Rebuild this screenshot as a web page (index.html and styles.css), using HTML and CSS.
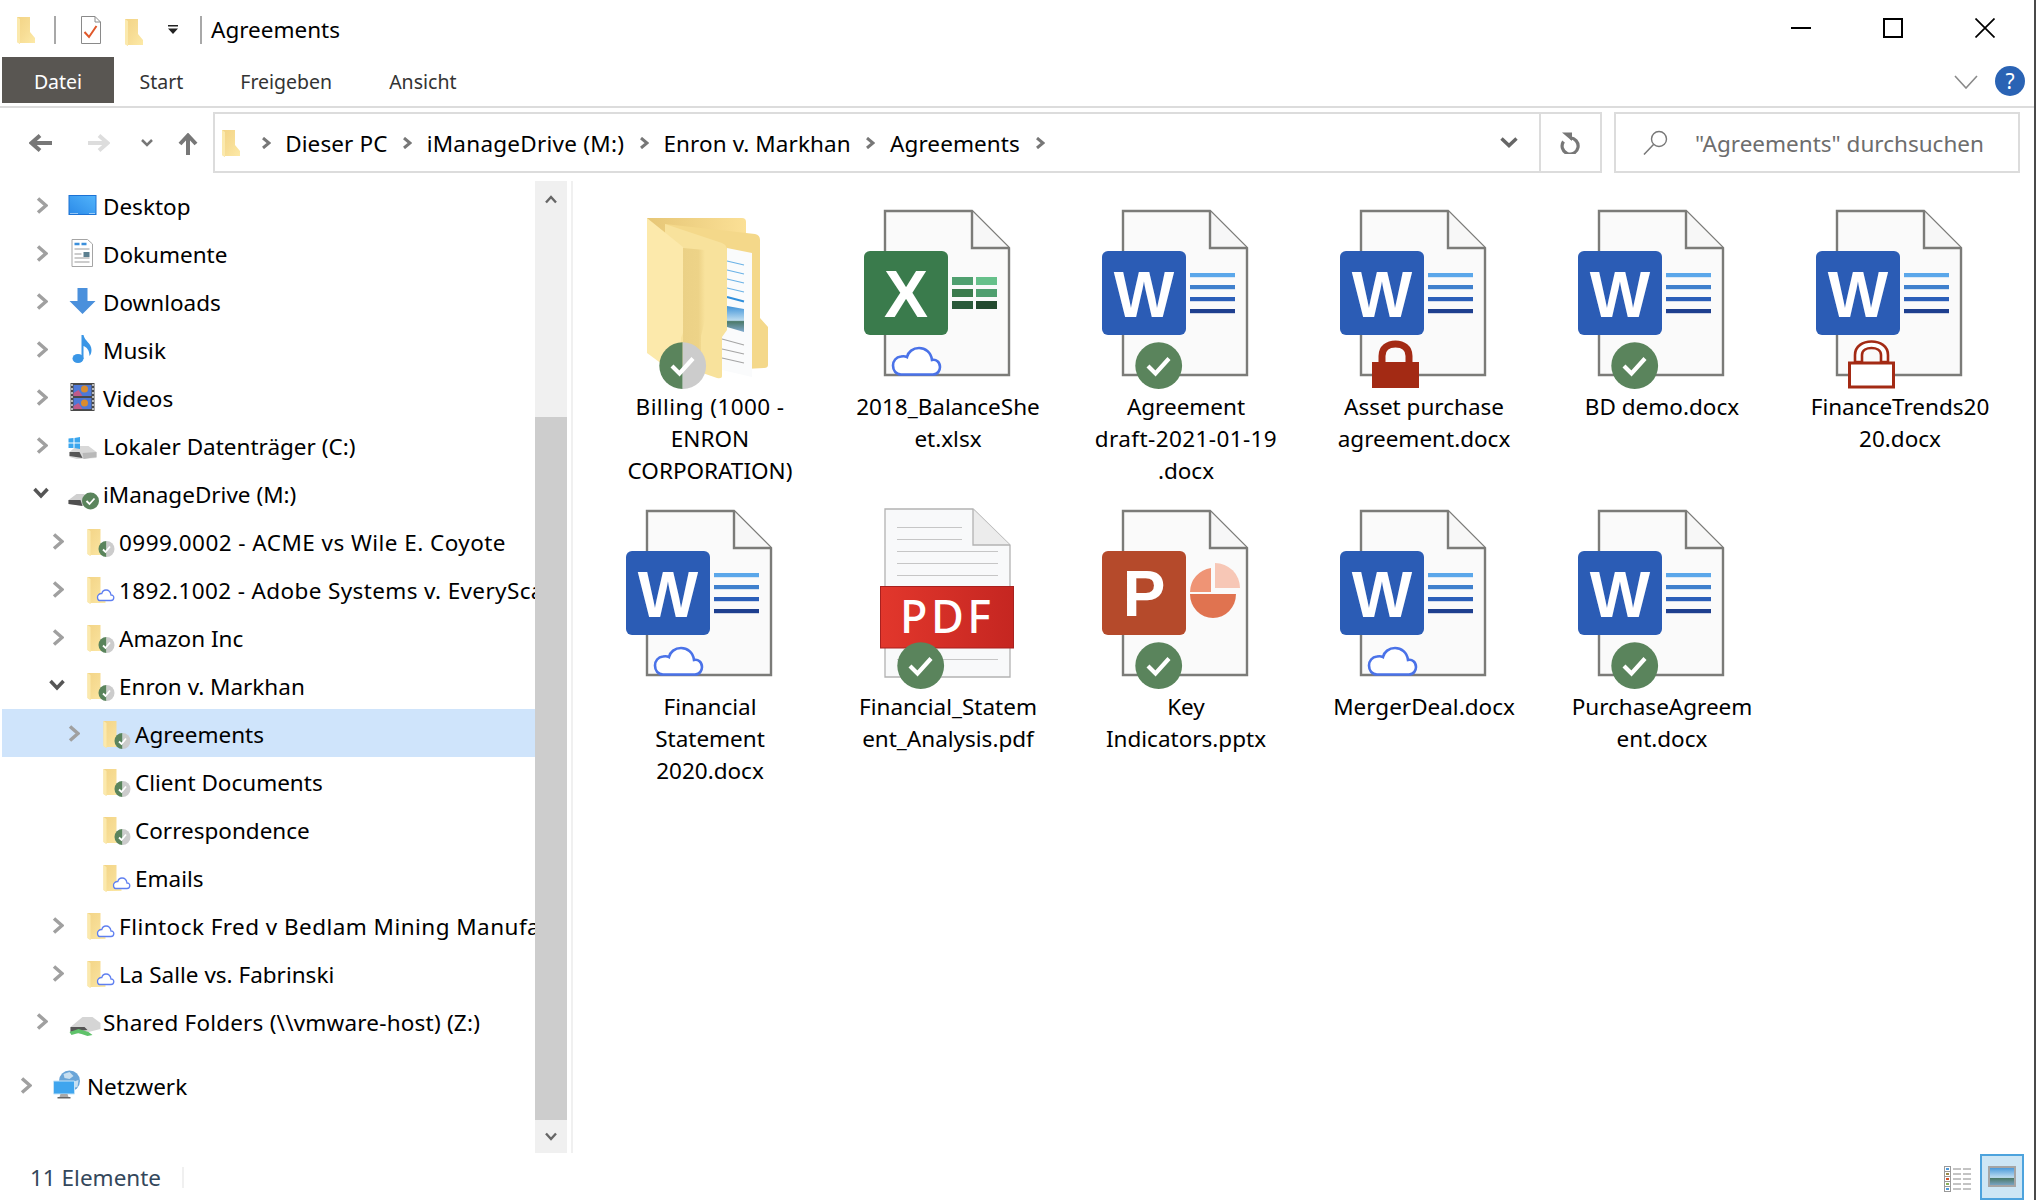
FILE: index.html
```html
<!DOCTYPE html>
<html lang="de">
<head>
<meta charset="utf-8">
<title>Agreements</title>
<link rel="stylesheet" href="styles.css">
</head>
<body>
<svg class="defs" aria-hidden="true">
  <defs>
    <linearGradient id="gf" x1="0" x2="1" y1="0" y2="1"><stop offset="0" stop-color="#f3d486"/><stop offset=".5" stop-color="#f7dd95"/><stop offset="1" stop-color="#fdeaa8"/></linearGradient>
    <linearGradient id="gbig" x1="0" x2="1" y1="0" y2="0"><stop offset="0" stop-color="#e6c676"/><stop offset="1" stop-color="#fbe096"/></linearGradient>
    <linearGradient id="gmid" x1="0" x2="1" y1="0" y2="0"><stop offset="0" stop-color="#ebd186"/><stop offset=".7" stop-color="#edd388"/><stop offset="1" stop-color="#f8e29c"/></linearGradient>
    <linearGradient id="gpdf" x1="0" x2="1" y1="0" y2="0"><stop offset="0" stop-color="#e2372c"/><stop offset="1" stop-color="#c52621"/></linearGradient>
    <linearGradient id="gdesk" x1="0" x2="1" y1="1" y2="0"><stop offset="0" stop-color="#2b8ae8"/><stop offset="1" stop-color="#52b4fb"/></linearGradient>
    <linearGradient id="gsky" x1="0" x2="0" y1="0" y2="1"><stop offset="0" stop-color="#3f93d8"/><stop offset=".55" stop-color="#bcdcf0"/><stop offset=".6" stop-color="#4c7a6a"/><stop offset="1" stop-color="#7fa9cf"/></linearGradient>

    <g id="sfolder">
      <path d="M0 0H13V15L18 21V26H3V27L0 25Z" fill="url(#gf)"/>
      <path d="M0 0L3 2V27L0 25Z" fill="#fbe9ad"/>
    </g>
    <g id="t-folder"><use href="#sfolder" x="3" y="6"/></g>
    <g id="t-sync">
      <use href="#t-folder"/>
      <path d="M22 18A8 8 0 0 0 22 34Z" fill="#5a845c"/>
      <path d="M22 18A8 8 0 0 1 22 34Z" fill="#cccccc"/>
      <path d="M18.5 26.5L21 29L25.5 23.5" fill="none" stroke="#fff" stroke-width="1.8"/>
    </g>
    <g id="t-cloud">
      <use href="#t-folder"/>
      <path d="M15 29.5H26.5C28.5 29.5 29.3 28 29.3 26.5C29.3 25 28 23.8 26.5 24C26 21 24 19 21.5 19C19.3 19 17.8 20.5 17.3 22.5C15 22.3 13 24 13 26C13 28 14 29.5 15 29.5Z" fill="#fff" stroke="#5f7ff0" stroke-width="1.3"/>
    </g>

    <g id="doc">
      <path d="M42 11H129L166 48V175H42Z" fill="#fafafa" stroke="#7b7b78" stroke-width="2.4"/>
      <path d="M129 11V48H166" fill="#f7f7f7" stroke="#7b7b78" stroke-width="2.4"/>
    </g>
    <g id="word">
      <use href="#doc"/>
      <rect x="21" y="51" width="84" height="84" rx="6" fill="#2b5cb5"/>
      <text class="tile" x="63" y="117" text-anchor="middle" font-size="64">W</text>
      <rect x="109" y="73" width="45" height="4.2" fill="#5ba7ea"/>
      <rect x="109" y="85" width="45" height="4.2" fill="#3f80cd"/>
      <rect x="109" y="97" width="45" height="4.2" fill="#2b5fb9"/>
      <rect x="109" y="109" width="45" height="4.2" fill="#1e3f8f"/>
    </g>
    <g id="excel">
      <use href="#doc"/>
      <rect x="21" y="51" width="84" height="84" rx="6" fill="#3a7b4c"/>
      <text class="tile" x="63" y="117" text-anchor="middle" font-size="66">X</text>
      <rect x="109" y="77" width="21" height="8" fill="#4f9f6f"/><rect x="133" y="77" width="21" height="8" fill="#66c08a"/>
      <rect x="109" y="89" width="21" height="8" fill="#3a7b4c"/><rect x="133" y="89" width="21" height="8" fill="#4f9f6f"/>
      <rect x="109" y="101" width="21" height="8" fill="#2a5a3a"/><rect x="133" y="101" width="21" height="8" fill="#234a2f"/>
    </g>
    <g id="ppt">
      <use href="#doc"/>
      <rect x="21" y="51" width="84" height="84" rx="6" fill="#b54a2b"/>
      <text class="tile" x="63" y="116" text-anchor="middle" font-size="64">P</text>
      <path d="M134 63A25 25 0 0 1 159 88H134Z" fill="#f7c7b6"/>
      <path d="M130 68A24.500 24.500 0 0 0 109 92H130Z" fill="#ef9475"/>
      <path d="M109 94H155A23 24 0 0 1 109 94Z" fill="#e07350"/>
    </g>
    <g id="pdf">
      <path d="M42 9H130L167 45V177H42Z" fill="#f8f9fa" stroke="#b2b2b2" stroke-width="1.300"/>
      <path d="M130 9V45H167" fill="#ececec" stroke="#b2b2b2" stroke-width="1.300"/>
      <path d="M54 27.500H119M54 39.500H119M54 51.500H155M54 63.500H155M54 75.500H155M54 159.500H155" stroke="#c6c6c6" stroke-width="1.200" fill="none"/>
      <rect x="37.500" y="86.500" width="133" height="61.500" fill="url(#gpdf)" stroke="#a8211f"/>
      <text class="pdf-text" x="57" y="133" font-size="45" textLength="91" lengthAdjust="spacing">PDF</text>
    </g>
    <g id="bigfolder">
      <path d="M42 18H137Q141 18 141 22V60H42Z" fill="url(#gbig)"/>
      <path d="M60 24L150 34Q155 35 155 40V118L163 127V165Q163 168 159 168L120 170L60 150Z" fill="#f4d88a"/>
      <path d="M122 48L147 53V177L117 170V120L122 110Z" fill="#fafbfc"/>
      <path d="M122 61L139 65M122 70L139 74M122 79L139 83M122 88L139 92" stroke="#6bb2e6" stroke-width="1.200"/>
      <path d="M122 97L139 101.500" stroke="#2f8fdc" stroke-width="2"/>
      <path d="M122 106L139 109V132L122 127Z" fill="url(#gsky)"/>
      <path d="M117 139L139 145M117 149L139 154M117 158L139 163" stroke="#a5a5a5" stroke-width="1.100"/>
      <path d="M60 24L117 43Q122 45 122 50V130L117 137V176Q117 179 112 178L60 160Z" fill="#f8e29c"/>
      <path d="M78 48L100 50V120L96 136V170L78 165Z" fill="url(#gmid)"/>
      <path d="M42 18L78 47V133L76 138V178L42 153Z" fill="#fce9ab"/>
    </g>
    <g id="b-check">
      <circle cx="77.700" cy="165.700" r="23.400" fill="#5a845c"/>
      <path d="M67 166L74.500 173.500L88 158.500" fill="none" stroke="#fff" stroke-width="4.200"/>
    </g>
    <g id="b-half">
      <path d="M77.700 142.300A23.400 23.400 0 0 0 77.700 189.100Z" fill="#5a845c"/>
      <path d="M77.700 142.300A23.400 23.400 0 0 1 77.700 189.100Z" fill="#cccccc"/>
      <path d="M67 166L74.500 173.500L88 158.500" fill="none" stroke="#fff" stroke-width="4.200"/>
    </g>
    <g id="b-cloud">
      <path d="M58 174.500H90C95 174.500 97 170 97 167C97 162 93 159 89 160C88 152 82 148 76 148C70 148 65 152 64 157C62 156 60 156 58 156.500C53 157 50 161 50 165.500C50 170.500 53 174.500 58 174.500Z" fill="#fff" stroke="#4a72e8" stroke-width="2.600"/>
    </g>
    <g id="b-lock">
      <path d="M63 164V156C63 148 69 144 76.500 144C84 144 90 148 90 156V164" fill="none" stroke="#a32a14" stroke-width="7"/>
      <rect x="53" y="162" width="47" height="26" fill="#a32a14"/>
    </g>
    <g id="b-lock-open">
      <path d="M60 162V155C60 146 68 141.500 76.500 141.500C85 141.500 93 146 93 155V162H86V155C86 150 81 148 76.500 148C72 148 67 150 67 155V162Z" fill="#fff" stroke="#a32a14" stroke-width="2.600"/>
      <rect x="54.500" y="163" width="44" height="24" fill="#fff" stroke="#a32a14" stroke-width="3"/>
    </g>
  </defs>
</svg>

<div class="window">
  <header class="titlebar">
    <svg class="qa-folder" width="18" height="27" viewBox="0 0 18 27"><use href="#sfolder"/></svg>
    <span class="qa-sep"></span>
    <svg class="qa-doc" width="20" height="28" viewBox="0 0 20 28"><path d="M.5.5H14L19.500 6V27.500H.5Z" fill="#fff" stroke="#8a8a8a"/><path d="M14 .5V6H19.500" fill="none" stroke="#8a8a8a"/><path d="M3.500 16L8 21L15.500 10" fill="none" stroke="#e0582a" stroke-width="2"/></svg>
    <svg class="qa-folder2" width="18" height="27" viewBox="0 0 18 27"><use href="#sfolder"/></svg>
    <svg class="qa-dd" width="10" height="9" viewBox="0 0 10 9"><path d="M0 0H10V1.500H0ZM0 3.500H10L5 9Z" fill="#222"/></svg>
    <span class="qa-sep sep2"></span>
    <span class="title-text">Agreements</span>
    <div class="win-ctrls">
      <span class="win-btn"><svg width="20" height="20" viewBox="0 0 20 20"><path d="M0 10H20" stroke="#000" stroke-width="2"/></svg></span>
      <span class="win-btn"><svg width="20" height="20" viewBox="0 0 20 20"><rect x="1" y="1" width="18" height="18" fill="none" stroke="#000" stroke-width="2"/></svg></span>
      <span class="win-btn"><svg width="20" height="20" viewBox="0 0 20 20"><path d="M.5.5L19.500 19.500M19.500.5L.5 19.500" stroke="#000" stroke-width="1.700"/></svg></span>
    </div>
  </header>

  <nav class="tabs">
    <span class="tab tab-file">Datei</span>
    <span class="tab">Start</span>
    <span class="tab">Freigeben</span>
    <span class="tab">Ansicht</span>
    <svg class="ribbon-chev" width="24" height="14" viewBox="0 0 24 14"><path d="M1 1L12 13L23 1" fill="none" stroke="#8a8a8a" stroke-width="1.600"/></svg>
    <span class="help">?</span>
  </nav>

  <div class="navbar">
    <div class="nav-btns">
      <svg width="23" height="18" viewBox="0 0 23 18"><path d="M23 9H3M11 1.500L2.500 9L11 16.500" fill="none" stroke="#777" stroke-width="4"/></svg>
      <svg class="nb-fwd" width="22" height="18" viewBox="0 0 22 18"><path d="M0 9H19M11 1.500L19.500 9L11 16.500" fill="none" stroke="#ddd" stroke-width="4"/></svg>
      <svg class="nb-dd" width="12" height="8" viewBox="0 0 12 8"><path d="M1 1L6 6L11 1" fill="none" stroke="#777" stroke-width="2.500"/></svg>
      <svg class="nb-up" width="20" height="22" viewBox="0 0 20 22"><path d="M10 22V3M2 11L10 2.500L18 11" fill="none" stroke="#777" stroke-width="4"/></svg>
    </div>
    <div class="address">
      <svg class="addr-folder" width="18" height="27" viewBox="0 0 18 27"><use href="#sfolder"/></svg>
      <svg class="addr-chev" width="10" height="12" viewBox="0 0 10 12"><path d="M2 1L8 6L2 11" fill="none" stroke="#777" stroke-width="3"/></svg>
      <span class="crumb">Dieser PC</span>
      <svg class="addr-chev" width="10" height="12" viewBox="0 0 10 12"><path d="M2 1L8 6L2 11" fill="none" stroke="#777" stroke-width="3"/></svg>
      <span class="crumb crumb-wide">iManageDrive (M:)</span>
      <svg class="addr-chev" width="10" height="12" viewBox="0 0 10 12"><path d="M2 1L8 6L2 11" fill="none" stroke="#777" stroke-width="3"/></svg>
      <span class="crumb">Enron v. Markhan</span>
      <svg class="addr-chev" width="10" height="12" viewBox="0 0 10 12"><path d="M2 1L8 6L2 11" fill="none" stroke="#777" stroke-width="3"/></svg>
      <span class="crumb">Agreements</span>
      <svg class="addr-chev" width="10" height="12" viewBox="0 0 10 12"><path d="M2 1L8 6L2 11" fill="none" stroke="#777" stroke-width="3"/></svg>
      <svg class="addr-dd" width="18" height="11" viewBox="0 0 18 11"><path d="M1.500 1.500L9 8.500L16.500 1.500" fill="none" stroke="#666" stroke-width="3.500"/></svg>
      <span class="refresh"><svg width="20" height="22" viewBox="0 0 20 22"><path d="M10 6A8 8 0 1 1 3.500 9.500" fill="none" stroke="#777" stroke-width="3.200"/><path d="M2 .5H12V9Z" fill="#777"/></svg></span>
    </div>
    <div class="search">
      <svg class="search-icon" width="25" height="25" viewBox="0 0 25 25"><circle cx="16" cy="9" r="7.500" fill="none" stroke="#777" stroke-width="1.400"/><path d="M10.500 14.500L1 24.500" stroke="#777" stroke-width="1.500"/></svg>
      <span class="search-text">"Agreements" durchsuchen</span>
    </div>
  </div>

  <main class="main">
    <div class="tree">
      <div class="row d0"><svg class="chev" viewBox="0 0 12 17"><path d="M2 1.500L10 8.500L2 15.500"/></svg><svg class="ticon" viewBox="0 0 34 36"><rect x=".5" y="8.500" width="27" height="19" fill="url(#gdesk)" stroke="#1c72d4"/><path d="M2 26.500H10M21 26.500H26" stroke="#fff" stroke-dasharray="1 1"/></svg><span class="rt">Desktop</span></div>
      <div class="row d0"><svg class="chev" viewBox="0 0 12 17"><path d="M2 1.500L10 8.500L2 15.500"/></svg><svg class="ticon" viewBox="0 0 34 36"><path d="M3.500 4.500H19L24 9V31.500H3.500Z" fill="#fff" stroke="#a5a5a5"/><path d="M6 9H11M13 9H18" stroke="#3b8fdc" stroke-width="2.500"/><path d="M6 14H21M6 27H21M6 23H21M6 19H13" stroke="#9a9a9a" stroke-width="1.200"/><rect x="15" y="17" width="6" height="5" fill="#5b7f8f"/></svg><span class="rt">Dokumente</span></div>
      <div class="row d0"><svg class="chev" viewBox="0 0 12 17"><path d="M2 1.500L10 8.500L2 15.500"/></svg><svg class="ticon" viewBox="0 0 34 36"><path d="M9 5H19V18H27L14 31L1 18H9Z" fill="#4a90dc"/></svg><span class="rt">Downloads</span></div>
      <div class="row d0"><svg class="chev" viewBox="0 0 12 17"><path d="M2 1.500L10 8.500L2 15.500"/></svg><svg class="ticon" viewBox="0 0 34 36"><ellipse cx="9.500" cy="27.500" rx="5.500" ry="4.500" fill="#3a96e6"/><path d="M13 28V4H15C16 10 23 12 23 19C23 22 22 24 21 25C21 19 18 16 15 15V28Z" fill="#3a96e6"/></svg><span class="rt">Musik</span></div>
      <div class="row d0"><svg class="chev" viewBox="0 0 12 17"><path d="M2 1.500L10 8.500L2 15.500"/></svg><svg class="ticon" viewBox="0 0 34 36"><rect x="2" y="4" width="24" height="28" fill="#4a4a4a"/><rect x="5" y="6" width="18" height="11" fill="#4e79d8"/><rect x="5" y="19" width="18" height="11" fill="#4e79d8"/><circle cx="16" cy="10" r="3.500" fill="#d98c2e"/><circle cx="16" cy="24" r="3.500" fill="#d98c2e"/><path d="M5 14L10 11L14 17H5ZM5 27L10 24L14 30H5Z" fill="#c05a8a"/><path d="M3.500 5V31M24.500 5V31" stroke="#ddd" stroke-width="1.500" stroke-dasharray="2 2"/></svg><span class="rt">Videos</span></div>
      <div class="row d0"><svg class="chev" viewBox="0 0 12 17"><path d="M2 1.500L10 8.500L2 15.500"/></svg><svg class="ticon" viewBox="0 0 34 36"><path d="M1 25L8 19H20L28 25V31L8 32L1 30Z" fill="#d8d8d8"/><path d="M1 25H11L14 31L1 29Z" fill="#555"/><path d="M14 26L28 25V30L15 32Z" fill="#b9b9b9"/><path d="M0 11.500L5 11V15.500H0ZM6 11L11.500 10V15.500H6ZM0 16.500H5V21H0ZM6 16.500H11.500V22L6 21Z" fill="#3ba6ee"/></svg><span class="rt">Lokaler Datenträger (C:)</span></div>
      <div class="row d0"><svg class="chev-down" viewBox="0 0 16 12"><path d="M1.500 2L8 9L14.500 2"/></svg><svg class="ticon" viewBox="0 0 34 36"><path d="M0 25L8 19H16V31L0 29Z" fill="#d0d0d0"/><path d="M0 25H12L14 31L0 29Z" fill="#4f4f4f"/><circle cx="22" cy="26" r="8.500" fill="#5a845c"/><path d="M18 26L21 29L26 23.500" fill="none" stroke="#fff" stroke-width="1.800"/></svg><span class="rt">iManageDrive (M:)</span></div>
      <div class="row d1"><svg class="chev" viewBox="0 0 12 17"><path d="M2 1.500L10 8.500L2 15.500"/></svg><svg class="ticon" viewBox="0 0 34 36"><use href="#t-sync"/></svg><span class="rt wide">0999.0002 - ACME vs Wile E. Coyote</span></div>
      <div class="row d1"><svg class="chev" viewBox="0 0 12 17"><path d="M2 1.500L10 8.500L2 15.500"/></svg><svg class="ticon" viewBox="0 0 34 36"><use href="#t-cloud"/></svg><span class="rt wide2">1892.1002 - Adobe Systems v. EveryScale</span></div>
      <div class="row d1"><svg class="chev" viewBox="0 0 12 17"><path d="M2 1.500L10 8.500L2 15.500"/></svg><svg class="ticon" viewBox="0 0 34 36"><use href="#t-sync"/></svg><span class="rt">Amazon Inc</span></div>
      <div class="row d1"><svg class="chev-down" viewBox="0 0 16 12"><path d="M1.500 2L8 9L14.500 2"/></svg><svg class="ticon" viewBox="0 0 34 36"><use href="#t-sync"/></svg><span class="rt">Enron v. Markhan</span></div>
      <div class="row d2 selected"><svg class="chev" viewBox="0 0 12 17"><path d="M2 1.500L10 8.500L2 15.500"/></svg><svg class="ticon" viewBox="0 0 34 36"><use href="#t-sync"/></svg><span class="rt">Agreements</span></div>
      <div class="row d2"><span class="chev-none"></span><svg class="ticon" viewBox="0 0 34 36"><use href="#t-sync"/></svg><span class="rt">Client Documents</span></div>
      <div class="row d2"><span class="chev-none"></span><svg class="ticon" viewBox="0 0 34 36"><use href="#t-sync"/></svg><span class="rt">Correspondence</span></div>
      <div class="row d2"><span class="chev-none"></span><svg class="ticon" viewBox="0 0 34 36"><use href="#t-cloud"/></svg><span class="rt">Emails</span></div>
      <div class="row d1"><svg class="chev" viewBox="0 0 12 17"><path d="M2 1.500L10 8.500L2 15.500"/></svg><svg class="ticon" viewBox="0 0 34 36"><use href="#t-cloud"/></svg><span class="rt wide">Flintock Fred v Bedlam Mining Manufacturing</span></div>
      <div class="row d1"><svg class="chev" viewBox="0 0 12 17"><path d="M2 1.500L10 8.500L2 15.500"/></svg><svg class="ticon" viewBox="0 0 34 36"><use href="#t-cloud"/></svg><span class="rt">La Salle vs. Fabrinski</span></div>
      <div class="row d0"><svg class="chev" viewBox="0 0 12 17"><path d="M2 1.500L10 8.500L2 15.500"/></svg><svg class="ticon" viewBox="0 0 34 36"><path d="M2 24L14 14H24L32 20V26L12 31L2 29Z" fill="#d5d5d5"/><path d="M2 24H16L19 27L2 29Z" fill="#555"/><path d="M1 29L10 26L20 29L24 32L19 33L10 30L3 32Z" fill="#5fc26a"/></svg><span class="rt semi">Shared Folders (\\vmware-host) (Z:)</span></div>
      <div class="row dn net"><svg class="chev" viewBox="0 0 12 17"><path d="M2 1.500L10 8.500L2 15.500"/></svg><svg class="ticon" viewBox="0 0 34 36"><circle cx="17" cy="14" r="10.500" fill="#6aa5d8"/><path d="M11 7L17 5L21 9L17 12L12 11ZM20 15L26 13L25 20L20 21Z" fill="#c8dff0"/><path d="M1 14H22V27H1Z" fill="#3fa5ee" stroke="#c5e3f7"/><path d="M8 27H15L16 30H7Z" fill="#aaa"/><path d="M5 30H18V31.500H5Z" fill="#666"/></svg><span class="rt">Netzwerk</span></div>
    </div>
    <div class="scrollbar">
      <div class="sb-up"><svg width="12" height="9" viewBox="0 0 12 9"><path d="M1 7.500L6 2L11 7.500" fill="none" stroke="#666" stroke-width="2.400"/></svg></div>
      <div class="sb-thumb"></div>
      <div class="sb-down"><svg width="12" height="9" viewBox="0 0 12 9"><path d="M1 1.500L6 7L11 1.500" fill="none" stroke="#666" stroke-width="2.400"/></svg></div>
    </div>
    <div class="pane-line"></div>
    <section class="files">
      <figure class="file"><svg class="bigicon" viewBox="0 0 210 190"><use href="#bigfolder"/><use href="#b-half"/></svg><figcaption><span class="digits">Billing (1000 -</span><br>ENRON<br>CORPORATION)</figcaption></figure>
      <figure class="file"><svg class="bigicon" viewBox="0 0 210 190"><use href="#excel"/><use href="#b-cloud"/></svg><figcaption>2018_BalanceShe<br>et.xlsx</figcaption></figure>
      <figure class="file"><svg class="bigicon" viewBox="0 0 210 190"><use href="#word"/><use href="#b-check"/></svg><figcaption>Agreement<br><span class="digits">draft-2021-01-19</span><br>.docx</figcaption></figure>
      <figure class="file"><svg class="bigicon" viewBox="0 0 210 190"><use href="#word"/><use href="#b-lock"/></svg><figcaption>Asset purchase<br>agreement.docx</figcaption></figure>
      <figure class="file"><svg class="bigicon" viewBox="0 0 210 190"><use href="#word"/><use href="#b-check"/></svg><figcaption>BD demo.docx</figcaption></figure>
      <figure class="file"><svg class="bigicon" viewBox="0 0 210 190"><use href="#word"/><use href="#b-lock-open"/></svg><figcaption>FinanceTrends20<br>20.docx</figcaption></figure>
      <figure class="file"><svg class="bigicon" viewBox="0 0 210 190"><use href="#word"/><use href="#b-cloud"/></svg><figcaption>Financial<br>Statement<br>2020.docx</figcaption></figure>
      <figure class="file"><svg class="bigicon" viewBox="0 0 210 190"><use href="#pdf"/><use href="#b-check"/></svg><figcaption>Financial_Statem<br>ent_Analysis.pdf</figcaption></figure>
      <figure class="file"><svg class="bigicon" viewBox="0 0 210 190"><use href="#ppt"/><use href="#b-check"/></svg><figcaption>Key<br>Indicators.pptx</figcaption></figure>
      <figure class="file"><svg class="bigicon" viewBox="0 0 210 190"><use href="#word"/><use href="#b-cloud"/></svg><figcaption>MergerDeal.docx</figcaption></figure>
      <figure class="file"><svg class="bigicon" viewBox="0 0 210 190"><use href="#word"/><use href="#b-check"/></svg><figcaption>PurchaseAgreem<br>ent.docx</figcaption></figure>
    </section>
  </main>

  <footer class="status">
    <span class="count">11 Elemente</span>
    <span class="status-sep"></span>
    <svg class="view-list" width="27" height="26" viewBox="0 0 27 26">
      <rect x=".5" y=".5" width="6" height="25" fill="#fff" stroke="#999"/>
      <path d="M.5 5.500H6.500M.5 10.500H6.500M.5 15.500H6.500M.5 20.500H6.500" stroke="#999"/>
      <rect x="2" y="2" width="3" height="2" fill="#4f9ad8"/><rect x="2" y="7" width="3" height="2" fill="#9a8a4a"/><rect x="2" y="12" width="3" height="2" fill="#d0502a"/><rect x="2" y="17" width="3" height="2" fill="#8ab05a"/><rect x="2" y="22" width="3" height="2" fill="#4f9ad8"/>
      <path d="M9 3H17M19 3H27M9 8H17M19 8H27M9 13H17M19 13H27M9 18H17M19 18H27M9 23H17M19 23H27" stroke="#888"/>
    </svg>
    <span class="view-big"><svg width="28" height="21" viewBox="0 0 28 21"><rect x="1" y="1" width="26" height="19" fill="url(#gsky)" stroke="#a5a5a5" stroke-width="2"/></svg></span>
  </footer>
</div>
</body>
</html>
```
FILE: styles.css
```css
* { box-sizing: border-box; }
html, body { margin: 0; padding: 0; background: #fff; }
body { width: 2036px; height: 1200px; overflow: hidden; font-family: "Noto Sans", "Open Sans", sans-serif; font-size: 22.500px; color: #000; }
.defs { position: absolute; width: 0; height: 0; }
.window { width: 2036px; height: 1200px; display: flex; flex-direction: column; border-right: 2px solid #4a4a4a; }

.titlebar { height: 57px; display: flex; align-items: center; padding: 3px 3px 0 17px; flex: none; }
.qa-sep { width: 2px; height: 28px; background: #a8a8a8; margin-left: 19px; }
.qa-doc { margin-left: 25px; }
.qa-folder2 { margin-left: 24px; margin-top: 4px; }
.qa-dd { margin-left: 25px; margin-top: -2px; }
.sep2 { margin-left: 22px; }
.title-text { margin-left: 9px; line-height: 1; }
.win-ctrls { margin-left: auto; display: flex; margin-top: -4px; }
.win-btn { width: 92px; display: flex; justify-content: center; }

.tabs { height: 51px; flex: none; display: flex; align-items: flex-start; padding-left: 2px; border-bottom: 2px solid #dcdcdc; font-size: 19.500px; color: #333; position: relative; }
.tab { height: 46px; line-height: 50px; padding: 0 28.500px; }
.tab-file { width: 112px; padding: 0; margin-right: -3px; text-align: center; background: #595652; color: #fff; }
.ribbon-chev { margin-left: auto; margin-top: 18px; }
.help { width: 30px; height: 30px; margin: 9px 9px 0 17px; border-radius: 50%; background: #2a63b4; color: #fff; font-size: 21px; line-height: 30px; text-align: center; }

.navbar { height: 61px; margin-top: 4px; flex: none; display: flex; }
.nav-btns { width: 213px; flex: none; display: flex; align-items: center; padding-left: 29px; }
.nb-fwd { margin-left: 36px; }
.nb-dd { margin-left: 31px; }
.nb-up { margin-left: 25px; margin-top: 3px; }
.address { width: 1389px; flex: none; display: flex; align-items: center; gap: 14.600px; border: 2px solid #dcdcdc; padding-left: 7px; }
.crumb { position: relative; top: 1px; letter-spacing: .1px; }
.crumb-wide { letter-spacing: .25px; }
.addr-folder { margin-right: 6px; margin-top: 2px; }
.addr-dd { margin-left: auto; margin-right: 21px; }
.refresh { width: 61px; height: 100%; margin-left: -14.600px; border-left: 2px solid #dcdcdc; display: flex; align-items: center; justify-content: center; padding-right: 2px; }
.search { width: 406px; margin-left: 12px; flex: none; display: flex; align-items: center; border: 2px solid #dcdcdc; padding-left: 27px; color: #6d6d6d; }
.search-icon { margin-right: 27px; }
.search-text { position: relative; top: 1px; }

.main { flex: 1; margin-top: 8px; display: flex; min-height: 0; }
.tree { width: 535px; flex: none; padding-left: 2px; overflow: hidden; }
.row { height: 48px; display: flex; align-items: center; white-space: nowrap; }
.rt { position: relative; top: 1px; }
.wide { letter-spacing: .45px; }
.wide2 { letter-spacing: .38px; }
.semi { letter-spacing: .2px; }
.dn { padding-left: 18px; }
.d0 { padding-left: 34px; }
.d1 { padding-left: 50px; }
.d2 { padding-left: 66px; }
.net { margin-top: 16px; }
.selected { background: #cfe4fb; }
.chev, .chev-none { width: 12px; height: 17px; flex: none; margin-right: 20px; }
.chev path { fill: none; stroke: #a0a0a0; stroke-width: 3.500px; }
.chev-down { flex: none; width: 16px; height: 12px; margin-left: -3px; margin-right: 19px; }
.chev-down path { fill: none; stroke: #555; stroke-width: 3.500px; }
.ticon { width: 35px; height: 36px; flex: none; }

.scrollbar { width: 32px; flex: none; display: flex; flex-direction: column; }
.sb-up { height: 236px; background: #f0f0f0; display: flex; justify-content: center; padding: 14px 0 0 0; }
.sb-thumb { flex: 1; background: #cdcdcd; }
.sb-down { height: 33px; background: #f0f0f0; display: flex; justify-content: center; align-items: center; }
.pane-line { width: 2px; margin-left: 4px; background: #f0f0f0; flex: none; }
.files { flex: 1; padding: 19px 0 0 18px; display: grid; grid-template-columns: repeat(6, 238px); grid-auto-rows: 300px; align-content: start; }
.file { margin: 0; display: flex; flex-direction: column; align-items: center; }
.bigicon { width: 210px; height: 190px; flex: none; }
figcaption { margin-top: 1px; line-height: 32px; text-align: center; white-space: nowrap; }
.digits { letter-spacing: .4px; }
.tile { font-family: "Liberation Sans", sans-serif; font-weight: 700; fill: #fff; }
.pdf-text { font-family: "Noto Sans", sans-serif; font-weight: 500; fill: #fff; }

.status { height: 47px; flex: none; display: flex; align-items: center; padding: 2px 0 0 30px; color: #33475b; }
.status-sep { width: 2px; height: 21px; background: #f0f0f0; margin-left: 21px; }
.view-list { margin-left: auto; margin-right: 9px; margin-top: 2px; }
.view-big { width: 44px; height: 46px; margin-top: -2px; margin-right: 10px; border: 2px solid #4da3dd; background: #cde6f5; display: flex; align-items: center; justify-content: center; }
```
